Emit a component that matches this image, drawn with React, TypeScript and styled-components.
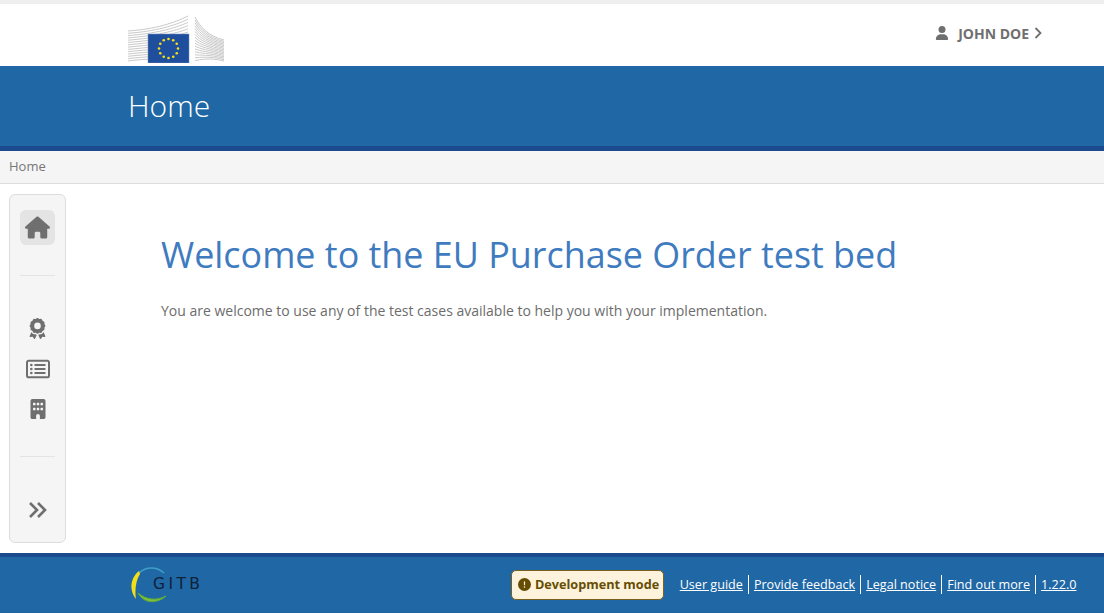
import React from "react";
import styled, { createGlobalStyle } from "styled-components";
import { FaHouse, FaAward, FaRegRectangleList, FaBuilding, FaUser, FaCircleExclamation } from "react-icons/fa6";

const Global = createGlobalStyle`
  html, body { margin: 0; padding: 0; height: 100%; background: #fff; }
  #root { height: 100%; }
  body { font-family: "Open Sans", "Liberation Sans", sans-serif; font-size: 14px; color: #6c6c6c; }
`;

const Page = styled.div`
  height: 614px;
  display: flex;
  flex-direction: column;
  overflow: hidden;
  background: #fff;
  border-top: 4px solid #eeeeee;
  box-sizing: border-box;
`;
const TopBar = styled.header`
  height: 62px;
  flex: none;
  box-sizing: border-box;
  display: flex;
  align-items: flex-end;
  justify-content: space-between;
  padding: 0 62px 3px 128px;
`;
const UserLink = styled.div`
  display: flex;
  align-items: center;
  align-self: flex-start;
  margin-top: 20px;
  height: 18px;
  color: #6f6f6f;
  font-weight: 700;
  font-size: 14px;
  gap: 9px;
  svg { flex: none; }
`;
const UserName = styled.span`
  margin-right: -4px;
`;
const Banner = styled.div`
  height: 80px;
  flex: none;
  background: #2067a5;
  border-bottom: 5px solid #1c4a8f;
  box-sizing: content-box;
  display: flex;
  align-items: center;
  padding-left: 128px;
`;
const BannerTitle = styled.h2`
  margin: 0 0 2px;
  color: #fff;
  font-size: 30px;
  font-weight: 300;
`;
const Breadcrumb = styled.nav`
  height: 33px;
  flex: none;
  box-sizing: border-box;
  background: #f5f5f5;
  border-bottom: 1px solid #dddddd;
  display: flex;
  align-items: center;
  padding: 0 0 3px 9px;
  font-size: 13px;
  color: #777;
`;
const Body = styled.main`
  flex: 1;
  display: flex;
  padding: 10px 0 10px 9px;
  min-height: 0;
`;
const Sidebar = styled.aside`
  width: 57px;
  box-sizing: border-box;
  flex: none;
  background: #f5f5f5;
  border: 1px solid #dddddd;
  border-radius: 6px;
  display: flex;
  flex-direction: column;
  align-items: center;
  padding-top: 15px;
`;
const NavButton = styled.div<{ $active?: boolean; $mt?: number }>`
  width: 35px;
  height: 35px;
  flex: none;
  display: flex;
  align-items: center;
  justify-content: center;
  border-radius: 6px;
  color: #6f6f6f;
  background: ${(p) => (p.$active ? "#e4e4e4" : "transparent")};
  margin-top: ${(p) => p.$mt ?? 0}px;
`;
const Separator = styled.hr<{ $mt: number }>`
  width: 35px;
  height: 1px;
  flex: none;
  border: 0;
  margin: ${(p) => p.$mt}px 0 0;
  background: #e4e4e4;
`;
const Content = styled.section`
  flex: 1;
  padding: 30px 0 0 95px;
`;
const Title = styled.h1`
  margin: 0;
  font-size: 35.9px;
  line-height: 62px;
  font-weight: 400;
  color: #3f7bbf;
`;
const Lead = styled.p`
  margin: 15px 0 0;
  font-size: 14px;
  line-height: 20px;
  color: #6c6c6c;
`;
const Footer = styled.footer`
  height: 56px;
  flex: none;
  margin-bottom: 1px;
  background: #2067a5;
  border-top: 4px solid #1c4a8f;
  display: flex;
  align-items: center;
  padding: 0 22.5px 0 130px;
`;
const GitbLogo = styled.div`
  position: relative;
  width: 76px;
  height: 40px;
`;
const GitbText = styled.span`
  position: absolute;
  left: 23px;
  top: 10px;
  font-family: "DejaVu Sans", sans-serif;
  font-size: 15.5px;
  line-height: 18px;
  letter-spacing: 3.4px;
  color: #0f2238;
`;
const FooterRight = styled.div`
  margin-left: auto;
  display: flex;
  align-items: center;
`;
const DevBadge = styled.div`
  display: flex;
  align-items: center;
  gap: 4px;
  height: 30px;
  box-sizing: border-box;
  padding: 0 4px 2px 6px;
  border: 1px solid #7a5f1e;
  border-radius: 5px;
  background: #fdf3dc;
  color: #664d03;
  font-weight: 700;
  font-size: 12.7px;
  margin-right: 10.5px;
`;
const FooterLink = styled.a<{ $first?: boolean }>`
  color: #fff;
  font-size: 12.6px;
  line-height: 19px;
  text-decoration: underline;
  padding: 0 5px;
  margin-bottom: 1px;
  ${(p) => (p.$first ? "" : "border-left: 1px solid #fff;")}
`;

const EcLogo = () => (
  <svg width="96" height="48" viewBox="0 0 96 48" style={{ display: "block" }}>
    <g fill="none" stroke="#c9c9c9" strokeWidth="1">
      {Array.from({ length: 14 }).map((_, i) => (
        <path key={i} d={`M0 ${16 + i * 2.3} C 28 ${14 + i * 2.2}, 46 ${8 + i * 2.8}, 60 ${1 + i * 3.2}`} />
      ))}
      {Array.from({ length: 16 }).map((_, i) => (
        <path key={i} d={`M67 ${2 + i * 2.9} C 72 ${12 + i * 2.2}, 80 ${21 + i * 1.4}, 96 ${25 + i * 1.4}`} />
      ))}
    </g>
    <rect x="20" y="19" width="41" height="29" fill="#1f4f9c" stroke="#6f8fc4" strokeWidth="0.5" />
    {Array.from({ length: 12 }).map((_, i) => {
      const a = (i * Math.PI) / 6;
      return <circle key={i} cx={40.5 + 9.5 * Math.cos(a)} cy={33.5 + 9.5 * Math.sin(a)} r="1.3" fill="#f7e01c" />;
    })}
  </svg>
);

const GitbMark = () => (
  <svg width="40" height="40" viewBox="0 0 40 40" style={{ display: "block" }}>
    <path d="M9 8 A18 18 0 0 1 34 8" fill="none" stroke="#3f9fc4" strokeWidth="1.6" />
    <path d="M9 6 C0 13 -1 26 6 34 C4.5 25 6 15 10 9 Z" fill="#f2df1a" />
    <path d="M8 28 C14 39 27 39 36 31 C27 36 16 35 8 28 Z" fill="#7fbf3a" stroke="#5fae3a" strokeWidth="1" />
  </svg>
);

const DoubleChevron = () => (
  <svg width="20" height="18" viewBox="0 0 20 18" fill="none" stroke="currentColor" strokeWidth="2.6" style={{ display: "block" }}>
    <path d="M2 2 L9 9 L2 16" />
    <path d="M10 2 L17 9 L10 16" />
  </svg>
);

const ThinChevron = () => (
  <svg width="8" height="12" viewBox="0 0 8 12" fill="none" stroke="currentColor" strokeWidth="1.8" style={{ display: "block" }}>
    <path d="M1.5 1 L6.5 6 L1.5 11" />
  </svg>
);

export default function App() {
  return (
    <Page>
      <Global />
      <TopBar>
        <EcLogo />
        <UserLink>
          <FaUser size={14} />
          <UserName>JOHN DOE</UserName>
          <ThinChevron />
        </UserLink>
      </TopBar>
      <Banner>
        <BannerTitle>Home</BannerTitle>
      </Banner>
      <Breadcrumb>Home</Breadcrumb>
      <Body>
        <Sidebar>
          <NavButton $active><FaHouse size={25} /></NavButton>
          <Separator $mt={30} />
          <NavButton $mt={35}><FaAward size={21} /></NavButton>
          <NavButton $mt={5}><FaRegRectangleList size={24} /></NavButton>
          <NavButton $mt={5}><FaBuilding size={20} /></NavButton>
          <Separator $mt={30} />
          <NavButton $mt={35}><DoubleChevron /></NavButton>
        </Sidebar>
        <Content>
          <Title>Welcome to the EU Purchase Order test bed</Title>
          <Lead>You are welcome to use any of the test cases available to help you with your implementation.</Lead>
        </Content>
      </Body>
      <Footer>
        <GitbLogo>
          <GitbMark />
          <GitbText>GITB</GitbText>
        </GitbLogo>
        <FooterRight>
          <DevBadge>
            <FaCircleExclamation size={13} />
            Development mode
          </DevBadge>
          <FooterLink $first>User guide</FooterLink>
          <FooterLink>Provide feedback</FooterLink>
          <FooterLink>Legal notice</FooterLink>
          <FooterLink>Find out more</FooterLink>
          <FooterLink>1.22.0</FooterLink>
        </FooterRight>
      </Footer>
    </Page>
  );
}
